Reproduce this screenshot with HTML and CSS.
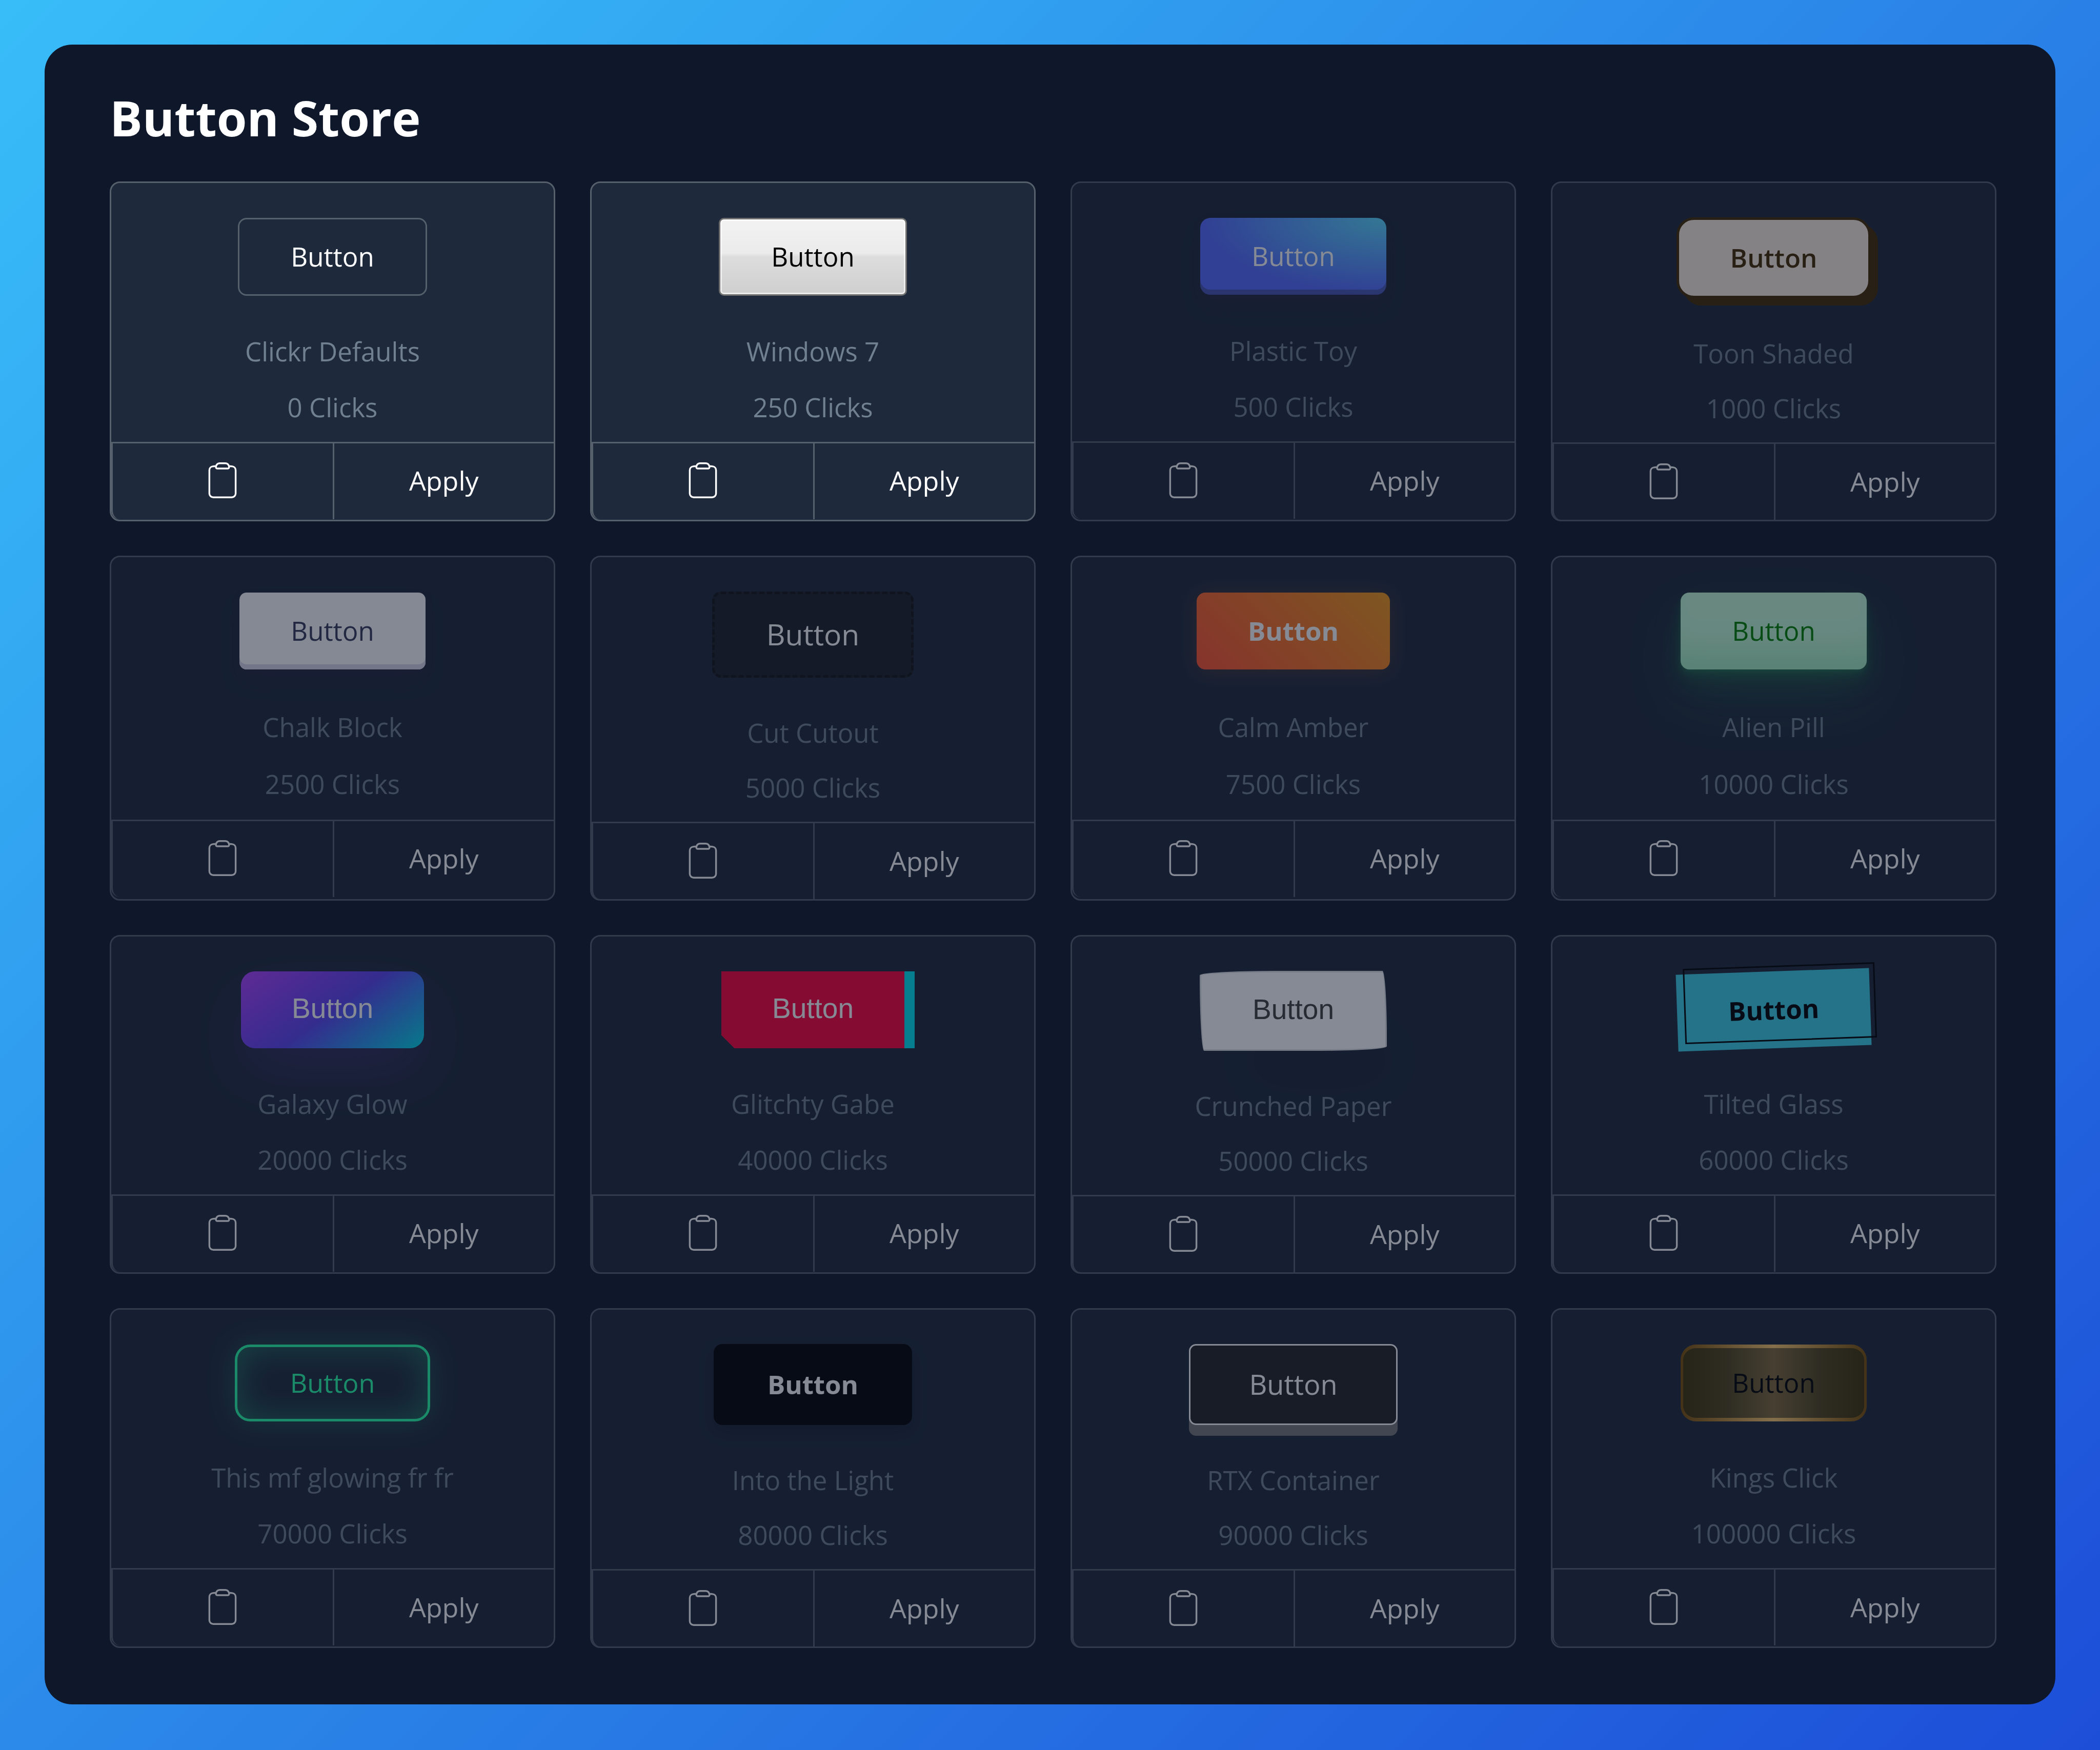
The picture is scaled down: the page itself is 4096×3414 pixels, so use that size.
FILE: index.html
```html
<!DOCTYPE html>
<html lang="en">
<head>
<meta charset="utf-8">
<meta name="viewport" content="width=device-width, initial-scale=1">
<title>Button Store</title>
<link rel="stylesheet" href="styles.css">
</head>
<body>
<svg class="sprite" aria-hidden="true">
  <symbol id="clipboard" viewBox="0 0 24 24">
    <path d="M15.666 3.888A2.25 2.25 0 0013.5 2.25h-3c-1.03 0-1.9.693-2.166 1.638m7.332 0c.055.194.084.4.084.612v0a.75.75 0 01-.75.75H9a.75.75 0 01-.75-.75v0c0-.212.03-.418.084-.612m7.332 0c.646.049 1.288.11 1.927.184 1.1.128 1.907 1.077 1.907 2.185V19.5a2.25 2.25 0 01-2.25 2.25H6.75A2.25 2.25 0 014.5 19.5V6.257c0-1.108.806-2.057 1.907-2.185a48.208 48.208 0 011.927-.184"/>
  </symbol>
</svg>
<main class="panel">
  <h1 class="title">Button Store</h1>
  <div class="grid">
    <article class="card">
      <div class="preview"><button type="button" class="btn btn-default">Button</button></div>
      <p class="label">Clickr Defaults</p>
      <p class="label">0 Clicks</p>
      <div class="actions"><button type="button" class="action" aria-label="Copy"><svg class="icon"><use href="#clipboard"/></svg></button><button type="button" class="action">Apply</button></div>
    </article>
    <article class="card">
      <div class="preview"><button type="button" class="btn btn-win7">Button</button></div>
      <p class="label">Windows 7</p>
      <p class="label">250 Clicks</p>
      <div class="actions"><button type="button" class="action" aria-label="Copy"><svg class="icon"><use href="#clipboard"/></svg></button><button type="button" class="action">Apply</button></div>
    </article>
    <article class="card locked">
      <div class="preview"><button type="button" class="btn btn-plastic">Button</button></div>
      <p class="label">Plastic Toy</p>
      <p class="label">500 Clicks</p>
      <div class="actions"><button type="button" class="action" aria-label="Copy"><svg class="icon"><use href="#clipboard"/></svg></button><button type="button" class="action">Apply</button></div>
    </article>
    <article class="card locked">
      <div class="preview"><button type="button" class="btn btn-toon">Button</button></div>
      <p class="label">Toon Shaded</p>
      <p class="label">1000 Clicks</p>
      <div class="actions"><button type="button" class="action" aria-label="Copy"><svg class="icon"><use href="#clipboard"/></svg></button><button type="button" class="action">Apply</button></div>
    </article>
    <article class="card locked">
      <div class="preview"><button type="button" class="btn btn-chalk">Button</button></div>
      <p class="label">Chalk Block</p>
      <p class="label">2500 Clicks</p>
      <div class="actions"><button type="button" class="action" aria-label="Copy"><svg class="icon"><use href="#clipboard"/></svg></button><button type="button" class="action">Apply</button></div>
    </article>
    <article class="card locked">
      <div class="preview"><button type="button" class="btn btn-cutout">Button</button></div>
      <p class="label">Cut Cutout</p>
      <p class="label">5000 Clicks</p>
      <div class="actions"><button type="button" class="action" aria-label="Copy"><svg class="icon"><use href="#clipboard"/></svg></button><button type="button" class="action">Apply</button></div>
    </article>
    <article class="card locked">
      <div class="preview"><button type="button" class="btn btn-amber">Button</button></div>
      <p class="label">Calm Amber</p>
      <p class="label">7500 Clicks</p>
      <div class="actions"><button type="button" class="action" aria-label="Copy"><svg class="icon"><use href="#clipboard"/></svg></button><button type="button" class="action">Apply</button></div>
    </article>
    <article class="card locked">
      <div class="preview"><button type="button" class="btn btn-alien">Button</button></div>
      <p class="label">Alien Pill</p>
      <p class="label">10000 Clicks</p>
      <div class="actions"><button type="button" class="action" aria-label="Copy"><svg class="icon"><use href="#clipboard"/></svg></button><button type="button" class="action">Apply</button></div>
    </article>
    <article class="card locked">
      <div class="preview"><button type="button" class="btn btn-galaxy">Button</button></div>
      <p class="label">Galaxy Glow</p>
      <p class="label">20000 Clicks</p>
      <div class="actions"><button type="button" class="action" aria-label="Copy"><svg class="icon"><use href="#clipboard"/></svg></button><button type="button" class="action">Apply</button></div>
    </article>
    <article class="card locked">
      <div class="preview"><button type="button" class="btn btn-glitch">Button</button></div>
      <p class="label">Glitchty Gabe</p>
      <p class="label">40000 Clicks</p>
      <div class="actions"><button type="button" class="action" aria-label="Copy"><svg class="icon"><use href="#clipboard"/></svg></button><button type="button" class="action">Apply</button></div>
    </article>
    <article class="card locked">
      <div class="preview"><button type="button" class="btn btn-paper">Button</button></div>
      <p class="label">Crunched Paper</p>
      <p class="label">50000 Clicks</p>
      <div class="actions"><button type="button" class="action" aria-label="Copy"><svg class="icon"><use href="#clipboard"/></svg></button><button type="button" class="action">Apply</button></div>
    </article>
    <article class="card locked">
      <div class="preview"><button type="button" class="btn btn-tilted">Button</button></div>
      <p class="label">Tilted Glass</p>
      <p class="label">60000 Clicks</p>
      <div class="actions"><button type="button" class="action" aria-label="Copy"><svg class="icon"><use href="#clipboard"/></svg></button><button type="button" class="action">Apply</button></div>
    </article>
    <article class="card locked">
      <div class="preview"><button type="button" class="btn btn-glow">Button</button></div>
      <p class="label">This mf glowing fr fr</p>
      <p class="label">70000 Clicks</p>
      <div class="actions"><button type="button" class="action" aria-label="Copy"><svg class="icon"><use href="#clipboard"/></svg></button><button type="button" class="action">Apply</button></div>
    </article>
    <article class="card locked">
      <div class="preview"><button type="button" class="btn btn-light">Button</button></div>
      <p class="label">Into the Light</p>
      <p class="label">80000 Clicks</p>
      <div class="actions"><button type="button" class="action" aria-label="Copy"><svg class="icon"><use href="#clipboard"/></svg></button><button type="button" class="action">Apply</button></div>
    </article>
    <article class="card locked">
      <div class="preview"><button type="button" class="btn btn-rtx">Button</button></div>
      <p class="label">RTX Container</p>
      <p class="label">90000 Clicks</p>
      <div class="actions"><button type="button" class="action" aria-label="Copy"><svg class="icon"><use href="#clipboard"/></svg></button><button type="button" class="action">Apply</button></div>
    </article>
    <article class="card locked">
      <div class="preview"><button type="button" class="btn btn-king">Button</button></div>
      <p class="label">Kings Click</p>
      <p class="label">100000 Clicks</p>
      <div class="actions"><button type="button" class="action" aria-label="Copy"><svg class="icon"><use href="#clipboard"/></svg></button><button type="button" class="action">Apply</button></div>
    </article>
  </div>
</main>
</body>
</html>
```
FILE: styles.css
```css
*,
*::before,
*::after {
  box-sizing: border-box;
}

body {
  margin: 0;
  min-height: 100vh;
  padding: 87px;
  background: linear-gradient(135deg, #38bdf8, #1d4ed8);
  color: #fff;
  font-family: "Open Sans", "Noto Sans", sans-serif;
  font-size: 51px;
  line-height: 82px;
}

.sprite {
  position: absolute;
  width: 0;
  height: 0;
}

.panel {
  padding: 78px 115px 110px 127px;
  border-radius: 54px;
  background: #0f172a;
}

.title {
  margin: 0 0 61px;
  font-size: 95px;
  font-weight: 700;
  line-height: 128px;
}

.grid {
  display: grid;
  grid-template-columns: repeat(4, minmax(0, 1fr));
  gap: 67px 68px;
}

/* Spare height in a row of cards is shared between the card's own rows */
.card {
  display: grid;
  grid-template-columns: 1fr;
  grid-template-rows: repeat(4, auto);
  border: 3px solid #56606c;
  border-radius: 20px;
  background: #1e293b;
  text-align: center;
}

.locked {
  opacity: 0.5;
}

.preview {
  display: flex;
  align-items: center;
  justify-content: center;
  padding: 67px 0 54px;
}

.label {
  align-self: center;
  margin: 0;
  padding: 12px 0 13px;
  color: #708090;
}

.actions {
  align-self: start;
  display: grid;
  grid-template-columns: 1fr 1fr;
  height: 151px;
  margin-top: 13px;
  border-top: 3px solid #56606c;
}

.action {
  display: flex;
  align-items: center;
  justify-content: center;
  padding: 0 0 3px;
  border: 0;
  border-left: 3px solid #56606c;
  background: none;
  color: #fff;
  font: inherit;
  font-size: 52px;
  font-weight: 500;
  cursor: pointer;
}

.action:first-child {
  border-bottom-left-radius: 17px;
}

.icon {
  width: 82px;
  height: 82px;
  fill: none;
  stroke: currentColor;
  stroke-width: 1;
  stroke-linecap: round;
  stroke-linejoin: round;
}

/* Store buttons */

.btn {
  position: relative;
  margin: 0;
  padding: 33px 100px 35px;
  border: 0;
  border-radius: 17px;
  background: none;
  color: #fff;
  font: inherit;
  cursor: pointer;
}

.btn-default {
  padding: 31px 100px 33px;
  border: 3px solid #56606c;
  font-weight: 500;
}

.btn-win7 {
  padding: 31px 99px 33px;
  border: 3px solid #707070;
  border-radius: 10px;
  background: linear-gradient(#f2f2f2 0%, #ebebeb 45%, #ddd 50%, #cfcfcf 100%);
  box-shadow: inset 0 0 0 3px rgba(255, 255, 255, 0.6);
  color: #000;
}

.btn-plastic {
  border-radius: 20px;
  background: radial-gradient(100% 100% at 100% 0, #5adaff 0, #5468ff 100%);
  box-shadow: rgba(45, 35, 66, 0.4) 0 7px 14px, rgba(45, 35, 66, 0.3) 0 24px 44px -10px, rgba(58, 65, 111, 0.5) 0 -10px 0 inset;
  font-weight: 500;
}

.btn-toon {
  padding: 32px 100px 34px;
  border: 5px solid #422800;
  border-radius: 34px;
  background: #fbeee0;
  box-shadow: 14px 14px 0 0 #422800;
  color: #422800;
  font-weight: 600;
}

.btn-chalk {
  border-radius: 14px;
  background: #fcfcfd;
  box-shadow: rgba(45, 35, 66, 0.4) 0 7px 14px, rgba(45, 35, 66, 0.3) 0 24px 44px -10px, #d6d6e7 0 -10px 0 inset;
  color: #36395a;
}

.btn-cutout {
  padding: 32px 101px 34px;
  border: 5px dashed #121212;
  background: #1d1f26;
  font-size: 57px;
  line-height: 92px;
  font-weight: 500;
}

.btn-amber {
  background: linear-gradient(45deg, #ff512f 0%, #f09819 100%);
  box-shadow: rgba(240, 110, 30, 0.2) 0 4px 40px;
  font-weight: 700;
}

.btn-alien {
  background: #c2fbd7;
  box-shadow: rgba(44, 187, 99, 0.2) 0 -85px 61px -48px inset, rgba(44, 187, 99, 0.15) 0 3px 7px, rgba(44, 187, 99, 0.15) 0 7px 14px, rgba(44, 187, 99, 0.15) 0 14px 27px, rgba(44, 187, 99, 0.15) 0 27px 55px, rgba(44, 187, 99, 0.15) 0 55px 109px;
  color: green;
}

.btn-galaxy,
.btn-glitch,
.btn-paper {
  padding: 31px 99px 37px;
  font-family: "Liberation Sans", Arial, sans-serif;
  font-size: 55px;
}

.btn-galaxy {
  border-radius: 27px;
  background: linear-gradient(144deg, #af40ff, #5b42f3 50%, #00ddeb);
  box-shadow: rgba(151, 65, 252, 0.2) 0 51px 102px -17px;
}

.btn-glitch {
  border-radius: 0;
  background: linear-gradient(45deg, transparent 5%, #ff013c 5%);
  box-shadow: 20px 0 0 #00e6f6;
}

.btn-paper {
  padding: 31px 100px 37px;
  border: 3px solid #dfe1e6;
  border-radius: 870px 51px 768px 51px / 51px 768px 51px 870px;
  background: #fff;
  box-shadow: rgba(0, 0, 0, 0.2) 51px 95px 85px -61px;
  color: #41403e;
}

.btn-tilted {
  border-radius: 0;
  background: #3dd1e7;
  color: #000;
  font-weight: 700;
  transform: rotate(-2deg);
}

.btn-tilted::after {
  content: "";
  position: absolute;
  bottom: 14px;
  left: 14px;
  width: calc(100% - 3px);
  height: calc(100% - 3px);
  border: 3px solid #000;
}

.btn-glow {
  padding: 28px 103px 30px;
  border: 5px solid #26ffa6;
  border-radius: 30px;
  box-shadow: rgba(38, 255, 166, 0.2) 0 0 55px, inset rgba(38, 255, 166, 0.35) 0 0 68px;
  color: #26ffa6;
  font-size: 52px;
}

.btn-light {
  padding: 37px 105px 39px;
  background: #000;
  box-shadow: rgba(0, 0, 0, 0.2) 0 14px 30px;
  font-weight: 700;
}

.btn-rtx {
  padding: 34px 114px 36px;
  border: 3px solid #fff;
  border-radius: 14px;
  background: #222;
  box-shadow: 0 21px 0 #777;
  font-size: 54px;
  font-weight: 500;
}

.btn-king {
  padding: 26px 95px 28px;
  border: solid transparent;
  border-width: 7px 5px;
  border-radius: 30px;
  background: linear-gradient(to right, #3f3106 0%, #51451c 25%, #7f693a 50%, #51451c 75%, #3f3106 100%) padding-box, linear-gradient(to right, #7a4f06 0%, #fbc96e 50%, #7a4f06 100%) border-box;
  color: #000;
}
```
